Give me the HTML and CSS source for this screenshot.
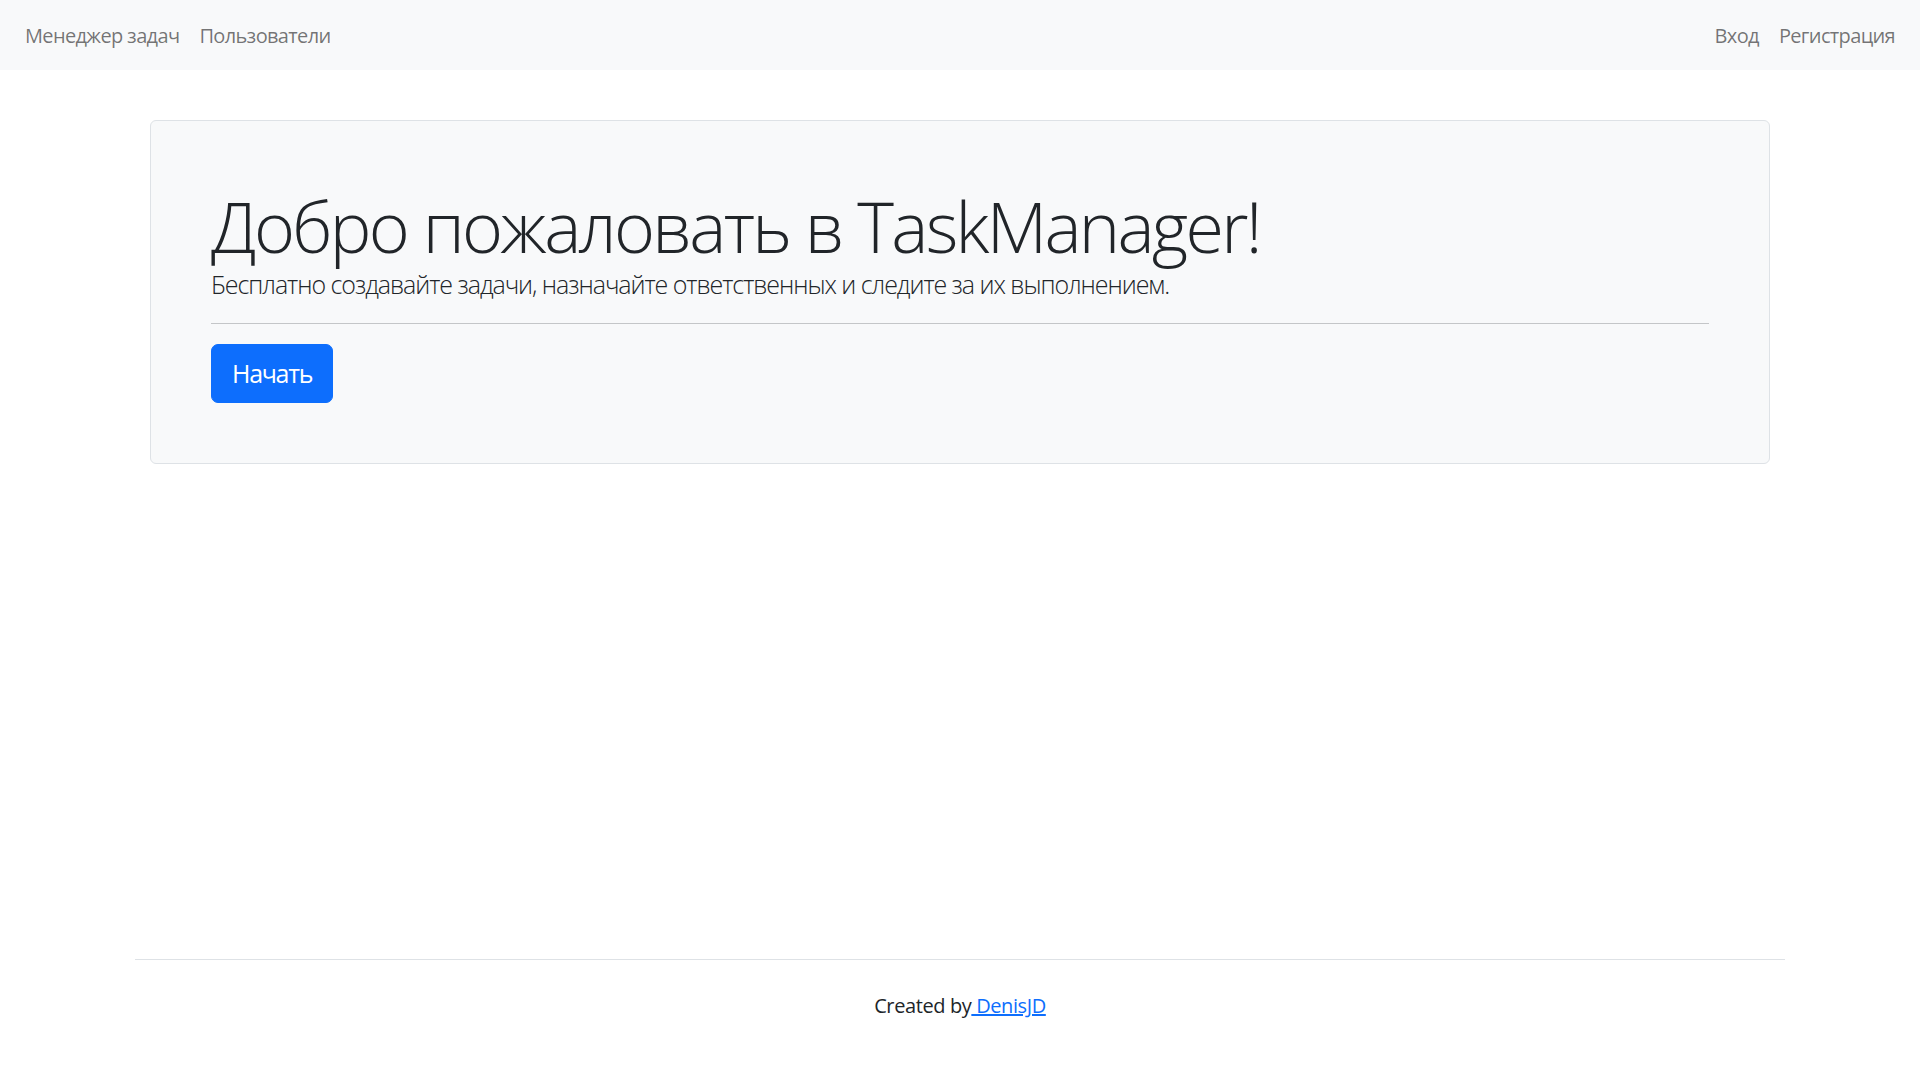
FILE: index.html
```html
<!DOCTYPE html>
<html lang="ru">
<head>
<meta charset="utf-8">
<title>Менеджер задач</title>
<link rel="stylesheet" href="styles.css">
</head>
<body>
<div class="page">
  <nav class="navbar">
    <ul class="nav-list">
      <li><a class="nav-link" href="#">Менеджер задач</a></li>
      <li><a class="nav-link" href="#">Пользователи</a></li>
    </ul>
    <ul class="nav-list">
      <li><a class="nav-link" href="#">Вход</a></li>
      <li><a class="nav-link" href="#">Регистрация</a></li>
    </ul>
  </nav>

  <main class="container main">
    <div class="jumbo">
      <h1 class="display">Добро пожаловать в TaskManager!</h1>
      <p class="lead">Бесплатно создавайте задачи, назначайте ответственных и следите за их выполнением.</p>
      <hr class="divider">
      <a class="btn-primary" href="#">Начать</a>
    </div>
  </main>

  <footer class="container footer">
    <p class="footer-text">Created by<a class="footer-link" href="#"> DenisJD</a></p>
  </footer>
</div>
</body>
</html>
```
FILE: styles.css
```css
* { box-sizing: border-box; }

html, body {
  margin: 0;
  padding: 0;
}

body {
  font-family: "Open Sans", "Noto Sans", sans-serif;
  font-size: 20px;
  line-height: 30px;
  color: #212529;
  background: #ffffff;
}

.page {
  min-height: 100vh;
  display: flex;
  flex-direction: column;
}

.navbar {
  background: #f8f9fa;
  height: 70px;
  padding: 10px 15px;
  display: flex;
  justify-content: space-between;
  align-items: center;
}

.nav-list {
  list-style: none;
  margin: 0;
  padding: 0;
  display: flex;
}

.nav-link {
  display: block;
  padding: 11px 10px 9px;
  color: rgba(0, 0, 0, 0.55);
  text-decoration: none;
  font-size: 20px;
  line-height: 30px;
  letter-spacing: -0.65px;
}

.container {
  width: 1650px;
  margin-left: auto;
  margin-right: auto;
}

.main {
  padding: 0 15px;
  margin-top: 50px;
}

.jumbo {
  background: #f8f9fa;
  border: 1px solid #dee2e6;
  border-radius: 6px;
  padding: 60px;
}

.display {
  margin: 0;
  padding-top: 6px;
  font-size: 70px;
  font-weight: 300;
  line-height: 79px;
  letter-spacing: -2.7px;
}

.lead {
  margin: 0 0 19px;
  font-size: 25px;
  font-weight: 300;
  line-height: 37.5px;
  letter-spacing: -1.05px;
}

.divider {
  margin: 0 0 20px;
  border: 0;
  border-top: 1px solid #c4c6c8;
  height: 0;
}

.btn-primary {
  display: inline-block;
  background: #0d6efd;
  border: 1px solid #0d6efd;
  color: #ffffff;
  text-decoration: none;
  font-size: 25px;
  line-height: 37px;
  padding: 10px 20px;
  border-radius: 7px;
  letter-spacing: -1.3px;
}

.footer {
  margin-top: auto;
  margin-bottom: 29px;
  border-top: 1px solid #dee2e6;
  padding: 31px 0 30px;
  text-align: center;
}

.footer-text {
  margin: 0;
  font-size: 20px;
  line-height: 30px;
  letter-spacing: -0.4px;
}

.footer-link {
  color: #0d6efd;
  text-decoration: underline;
}
```
